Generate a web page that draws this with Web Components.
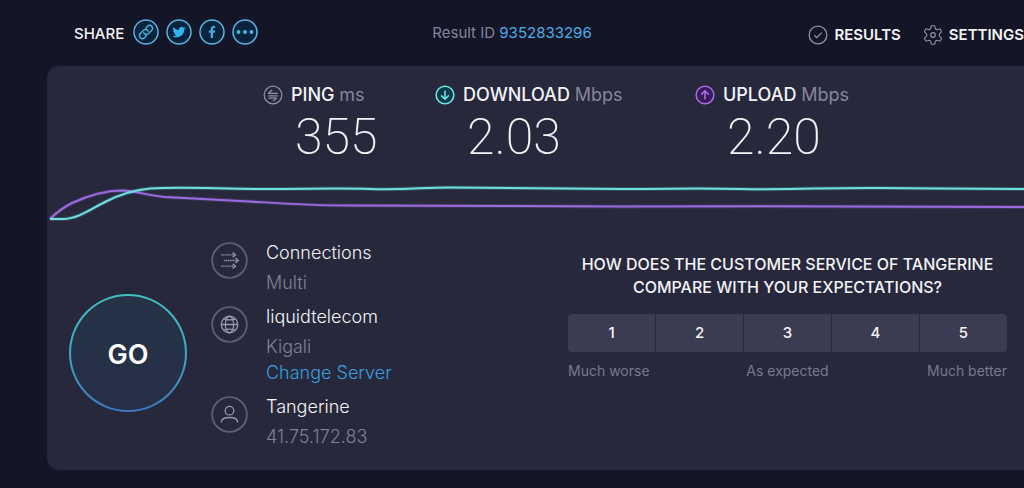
<!DOCTYPE html>
<html lang="en">
<head>
<meta charset="utf-8">
<meta name="viewport" content="width=device-width, initial-scale=1">
<title>Speed test result</title>
<style>
html { background: #141526; }
body { margin: 0; overflow-x: hidden; background: #141526; color: #f3f3f7; font-family: Inter, "Open Sans", sans-serif; }
</style>
</head>
<body>
<speed-app></speed-app>
<script>
const define = (name, html, setup) => {
  const template = document.createElement('template');
  template.innerHTML = html;
  customElements.define(name, class extends HTMLElement {
    constructor() {
      super();
      this.attachShadow({ mode: 'open' }).append(template.content.cloneNode(true));
    }
    connectedCallback() { if (setup) setup(this, this.shadowRoot); }
  });
};

const ICONS = {
  link: '<circle cx="13" cy="13" r="12" fill="none" stroke="#5fb0dc" stroke-width="1.5"/><g fill="none" stroke="#48b4e8" stroke-width="1.4" stroke-linecap="round" transform="rotate(-45 13 13)"><path d="M10.500 15.900H7.900a2.900 2.900 0 0 1 0-5.800h4.600a2.900 2.900 0 0 1 2.700 3.900M15.500 10.100h2.600a2.900 2.900 0 0 1 0 5.800h-4.600a2.900 2.900 0 0 1-2.700-3.900"/></g>',
  twitter: '<circle cx="13" cy="13" r="12" fill="none" stroke="#5fb0dc" stroke-width="1.5"/><path fill="#36b3ee" transform="translate(6.600 6.600) scale(.54)" d="M23.950 4.570a10 10 0 0 1-2.820.770 4.960 4.960 0 0 0 2.160-2.720 9.900 9.900 0 0 1-3.120 1.180 4.920 4.920 0 0 0-8.380 4.480C7.690 8.090 4.070 6.130 1.640 3.160a4.820 4.820 0 0 0-.670 2.480c0 1.710.870 3.210 2.190 4.100a4.900 4.900 0 0 1-2.230-.620v.060a4.920 4.920 0 0 0 3.950 4.830 5 5 0 0 1-2.210.080 4.940 4.940 0 0 0 4.600 3.420A9.870 9.870 0 0 1 0 19.540a13.990 13.990 0 0 0 7.550 2.210c9.050 0 14-7.500 14-13.990 0-.210 0-.420-.020-.630a9.940 9.940 0 0 0 2.420-2.560z"/>',
  facebook: '<circle cx="13" cy="13" r="12" fill="none" stroke="#5fb0dc" stroke-width="1.5"/><path fill="#48a9dc" d="M11.700 19v-5.200H9.800v-2.200h1.900V10c0-2 1.200-3.100 3-3.100.800 0 1.500.1 1.500.1v1.900h-1c-.900 0-1.200.500-1.200 1.200v1.500h2.100l-.300 2.200H14V19z"/>',
  more: '<circle cx="13" cy="13" r="12" fill="none" stroke="#5fb0dc" stroke-width="1.5"/><g fill="#48b4e8"><circle cx="6.500" cy="13" r="2"/><circle cx="13" cy="13" r="2"/><circle cx="19.500" cy="13" r="2"/></g>',
  check: '<g fill="none" stroke="#8f90a6" stroke-width="1.700"><circle cx="13" cy="13" r="11.500"/><path d="m8.300 13.300 3.200 3.200 6.400-6.600"/></g>',
  gear: '<g fill="none" stroke="#8f90a6" stroke-width="1.500" stroke-linejoin="round" transform="translate(13 13)"><path d="M-1.600-12h3.200q.7 0 .8.700l.5 2.300q.2 1.200 1.200 1.700 1 .6 2.100.2l2.200-.7q.7-.2 1 .3l1.500 2.600q.3.600-.2 1.100L9-2.200q-.9.900-.9 2.200T9 2.200l1.700 1.600q.5.500.2 1.100L9.400 7.500q-.3.500-1 .3l-2.200-.7q-1.100-.4-2.100.2-1 .5-1.200 1.700l-.5 2.300q-.1.700-.8.700h-3.200q-.7 0-.8-.7L-2.900 9q-.2-1.200-1.200-1.700-1-.6-2.100-.2l-2.200.7q-.7.200-1-.3l-1.500-2.600q-.3-.6.2-1.100L-9 2.200Q-8.100 1.300-8.100 0T-9-2.200l-1.700-1.600q-.5-.5-.2-1.100l1.500-2.600q.3-.5 1-.3l2.200.7q1.100.4 2.100-.2 1-.5 1.200-1.700l.5-2.300q.1-.7.800-.7z"/><circle r="3"/></g>',
  ping: '<g fill="none" stroke="#8f90a6" stroke-width="1.600" stroke-linejoin="round"><circle cx="13" cy="13" r="11.500"/><path d="M19 10.800H7l5-4.300M7 14h12M7 17.200h10.500L13 21"/></g>',
  down: '<circle cx="13" cy="13" r="11.500" fill="#0b3b47" stroke="#6de8e5" stroke-width="2"/><path d="M13 7v11.500m-5-5 5 5 5-5" fill="none" stroke="#6de8e5" stroke-width="2"/>',
  up: '<circle cx="13" cy="13" r="11.500" fill="#371a58" stroke="#a86fe6" stroke-width="2"/><path d="M13 19V7.500m-5 5 5-5 5 5" fill="none" stroke="#a86fe6" stroke-width="2"/>',
  multi: '<g fill="none" stroke="#9899ad"><circle cx="13" cy="13" r="12.200" stroke="#5d5e75" stroke-width="1.300"/><g stroke-width=".9"><path stroke-dasharray="1 .5" d="M7 9h10M9 13h10M7 17h10"/><path d="m15.200 7.300 2 1.700-2 1.700M17.200 11.300l2 1.700-2 1.700M15.200 15.300l2 1.700-2 1.700"/></g></g>',
  globe: '<g fill="none" stroke="#9899ad" stroke-width=".9"><circle cx="13" cy="13" r="12.200" stroke="#5d5e75" stroke-width="1.300"/><circle cx="13" cy="13" r="5.800"/><ellipse cx="13" cy="13" rx="2.900" ry="5.800"/><path d="M7.200 13h11.600M9 9q4 1.600 8 0M9 17q4-1.600 8 0"/></g>',
  user: '<g fill="none" stroke="#9899ad" stroke-width=".9" stroke-linecap="round"><circle cx="13" cy="13" r="12.200" stroke="#5d5e75" stroke-width="1.300"/><circle cx="13" cy="10.300" r="3"/><path d="M7.300 18.300c0-2.600 2.400-3.200 5.700-3.200s5.700.6 5.700 3.200"/></g>'
};

define('app-icon', `
<style>
:host { display: block; flex: none; width: var(--icon-size, 20px); height: var(--icon-size, 20px); }
svg { display: block; width: 100%; height: 100%; }
</style>
<svg viewBox="0 0 26 26" aria-hidden="true"></svg>`,
(host, root) => { root.querySelector('svg').innerHTML = ICONS[host.getAttribute('name')]; });

define('share-bar', `
<style>
:host { display: flex; align-items: center; gap: 9px; font-size: 15px; font-weight: 500; line-height: 24px; }
span { padding-top: 4px; }
div { display: flex; gap: 7px; --icon-size: 26px; }
button { display: block; padding: 0; border: 0; border-radius: 50%; background: #08233c; cursor: pointer; }
</style>
<span>SHARE</span>
<div>
  <button aria-label="Copy link"><app-icon name="link"></app-icon></button>
  <button aria-label="Share on Twitter"><app-icon name="twitter"></app-icon></button>
  <button aria-label="Share on Facebook"><app-icon name="facebook"></app-icon></button>
  <button aria-label="More"><app-icon name="more"></app-icon></button>
</div>`);

define('nav-link', `
<style>
:host { display: block; }
a { display: flex; align-items: center; gap: 6px; color: inherit; text-decoration: none; font-size: 15px; font-weight: 600; line-height: 24px; }
</style>
<a href="#"><slot></slot></a>`,
(host, root) => {
  const icon = document.createElement('app-icon');
  icon.setAttribute('name', host.getAttribute('icon'));
  root.querySelector('a').prepend(icon);
});

define('app-header', `
<style>
:host { display: grid; grid-template-columns: 1fr auto 1fr; align-items: center; height: 66px; }
share-bar { padding-left: 74px; margin-bottom: 2px; }
p { margin: 0; font-size: 15px; line-height: 24px; color: #85869c; white-space: nowrap; }
p a { color: #4aaee6; text-decoration: none; }
nav { display: flex; justify-content: flex-end; gap: 22px; padding-top: 4px; white-space: nowrap; }
</style>
<share-bar></share-bar>
<p>Result ID <a href="#">9352833296</a></p>
<nav><nav-link icon="check">RESULTS</nav-link><nav-link icon="gear">SETTINGS</nav-link></nav>`);

define('speed-metric', `
<style>
:host { display: block; }
header { display: flex; align-items: center; gap: 8px; font-size: 18px; line-height: 24px; font-weight: 500; white-space: nowrap; }
small { font-size: 18px; font-weight: 400; color: #85869c; }
p { margin: 0; padding-left: 32px; font-family: Roboto, sans-serif; font-size: 50px; line-height: 60px; font-weight: 200; }
</style>
<header><span><slot></slot> <small></small></span></header>
<p><slot name="value"></slot></p>`,
(host, root) => {
  const icon = document.createElement('app-icon');
  icon.setAttribute('name', host.getAttribute('icon'));
  root.querySelector('header').prepend(icon);
  root.querySelector('small').textContent = host.getAttribute('unit');
});

define('speed-graph', `
<style>
:host { display: block; height: 50px; }
svg { display: block; width: 100%; height: 100%; }
path { fill: none; vector-effect: non-scaling-stroke; }
.glow { stroke-width: 4; opacity: .2; }
.line { stroke-width: 2; }
.up { stroke: #9d6be0; }
.down { stroke: #70dfe3; }
</style>
<svg viewBox="47 175 977 50" preserveAspectRatio="none" aria-hidden="true">
  <defs>
    <path id="up" d="M50 219C58 211 64 207 72 203C92 194 108 190.500 122 190.500C137 191 145 195 165 197C200 199 225 200 250 201.500C290 204 310 205.500 350 205.500C480 206 560 207 620 206.500C760 205.500 850 207 1024 207"/>
    <path id="down" d="M50 219H62C78 219 91 209 105 202C122 193 135 190 150 188.500C180 186.500 210 188.500 260 189C310 189 340 188 370 189C410 190 420 187.500 450 187.500C500 187.500 560 189 620 189C680 189 690 188 740 189C800 190 820 187.500 880 188C930 188.500 970 189 1024 189"/>
  </defs>
  <use href="#up" class="glow up"/>
  <use href="#up" class="line up"/>
  <use href="#down" class="glow down"/>
  <use href="#down" class="line down"/>
</svg>`);

define('go-button', `
<style>
:host { display: block; }
button { display: block; width: 118px; height: 118px; padding: 4px 0 0; border: 2px solid transparent; border-radius: 50%; background: linear-gradient(#253345, #262f47) padding-box, linear-gradient(#3fc0bd, #3fa9c4 50%, #3c78c0) border-box; color: #fff; font: 600 27px/32px Inter, sans-serif; cursor: pointer; }
</style>
<button><slot></slot></button>`);

define('info-row', `
<style>
:host { display: flex; gap: 18px; --icon-size: 37px; font-size: 18px; line-height: 30px; font-weight: 300; }
.icon { padding-top: 4px; }
.sub { color: #808198; }
::slotted(a) { display: block; padding-bottom: 4px; line-height: 22px; color: #36a0dc; text-decoration: none; }
</style>
<div class="icon"></div>
<div><div><slot></slot></div><div class="sub"><slot name="sub"></slot></div><slot name="action"></slot></div>`,
(host, root) => { root.querySelector('.icon').innerHTML = `<app-icon name="${host.getAttribute('icon')}"></app-icon>`; });

define('rating-survey', `
<style>
:host { display: block; }
h2 { margin: 0 0 15px; font-size: 16px; line-height: 23px; font-weight: 500; text-align: center; white-space: nowrap; }
.scale { display: grid; grid-template-columns: repeat(5, 1fr); gap: 1px; border-radius: 4px; overflow: hidden; }
button { height: 38px; padding: 0; border: 0; background: #3b3c51; color: inherit; font: 500 15px/20px Inter, sans-serif; cursor: pointer; }
.legend { display: grid; grid-template-columns: repeat(3, 1fr); margin-top: 9px; font-size: 14px; line-height: 20px; color: #77788f; text-align: center; }
.legend :first-child { text-align: left; }
.legend :last-child { text-align: right; }
</style>
<h2>HOW DOES THE CUSTOMER SERVICE OF TANGERINE<br>COMPARE WITH YOUR EXPECTATIONS?</h2>
<div class="scale"><button>1</button><button>2</button><button>3</button><button>4</button><button>5</button></div>
<div class="legend"><span>Much worse</span><span>As expected</span><span>Much better</span></div>`);

define('speed-app', `
<style>
:host { display: block; padding-bottom: 18px; }
main { margin-left: 47px; padding: 17px 0 18px; border-radius: 12px 0 0 12px; background: #27283c; }
.metrics { display: grid; grid-template-columns: 172px 260px 1fr; padding: 0 17px 0 216px; }
speed-graph { margin-top: 8px; }
.details { display: grid; grid-template-columns: auto 1fr minmax(0, 439px); gap: 24px; margin-top: 13px; padding: 0 17px 0 22px; }
go-button { padding-top: 56px; }
.info { display: flex; flex-direction: column; gap: 4px; }
rating-survey { padding-top: 15px; }
</style>
<app-header></app-header>
<main>
  <div class="metrics">
    <speed-metric icon="ping" unit="ms">PING<span slot="value">355</span></speed-metric>
    <speed-metric icon="down" unit="Mbps">DOWNLOAD<span slot="value">2.03</span></speed-metric>
    <speed-metric icon="up" unit="Mbps">UPLOAD<span slot="value">2.20</span></speed-metric>
  </div>
  <speed-graph></speed-graph>
  <div class="details">
    <go-button>GO</go-button>
    <div class="info">
      <info-row icon="multi">Connections<span slot="sub">Multi</span></info-row>
      <info-row icon="globe">liquidtelecom<span slot="sub">Kigali</span><a slot="action" href="#">Change Server</a></info-row>
      <info-row icon="user">Tangerine<span slot="sub">41.75.172.83</span></info-row>
    </div>
    <rating-survey></rating-survey>
  </div>
</main>`);
</script>
</body>
</html>
